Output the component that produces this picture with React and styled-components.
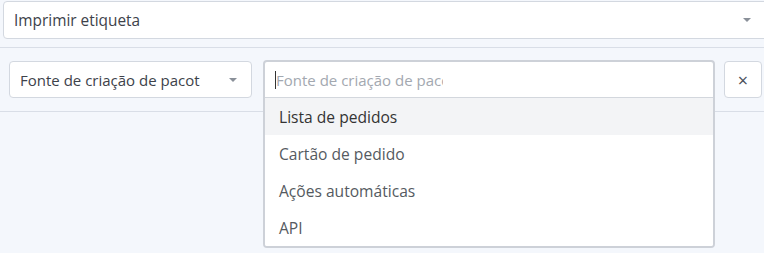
import React from 'react';
import styled, { createGlobalStyle } from 'styled-components';

const options = ['Lista de pedidos', 'Cartão de pedido', 'Ações automáticas', 'API'];

const GlobalStyle = createGlobalStyle`
	html, body {
		margin: 0;
		padding: 0;
		background: #f4f7fc;
		font-family: 'Open Sans', 'Liberation Sans', sans-serif;
		overflow: hidden;
	}
`;

const App = () => {
	return (
		<Page>
			<GlobalStyle />
			<Top>
				<Select wide>
					<SelectText size={15.4}>Imprimir etiqueta</SelectText>
					<Caret />
				</Select>
			</Top>
			<Panel>
				<Select>
					<SelectText size={15}>Fonte de criação de pacot</SelectText>
					<Caret />
				</Select>
				<Combo>
					<Popup>
						<SearchRow>
							<Cursor />
							<Placeholder>Fonte de criação de pacote</Placeholder>
						</SearchRow>
						<Menu>
							{options.map((option, i) => (
								<Option key={option} active={i === 0}>
									{option}
								</Option>
							))}
						</Menu>
					</Popup>
				</Combo>
				<ClearButton>×</ClearButton>
			</Panel>
		</Page>
	);
};

export default App;

const Page = styled.div`
	width: 764px;
	height: 253px;
`;

const Top = styled.div`
	padding: 1px 0 0 3px;
	height: 48px;
	box-sizing: border-box;
	border-bottom: 1px solid #d9dee7;
`;

const Select = styled.div`
	display: flex;
	align-items: center;
	justify-content: space-between;
	box-sizing: border-box;
	width: ${(p) => (p.wide ? '780px' : '243px')};
	height: ${(p) => (p.wide ? '38px' : '37px')};
	padding: ${(p) => (p.wide ? '0 31px 0 10px' : '0 14px 0 10px')};
	background: #fff;
	border: 1px solid #d3d8e0;
	border-radius: 4px;
	flex-shrink: 0;
`;

const SelectText = styled.span`
	font-size: ${(p) => p.size}px;
	color: #3d424a;
	white-space: nowrap;
	overflow: hidden;
`;

const Caret = styled.span`
	width: 0;
	height: 0;
	border-left: 4px solid transparent;
	border-right: 4px solid transparent;
	border-top: 4px solid #8a9099;
`;

const Panel = styled.div`
	display: flex;
	align-items: flex-start;
	gap: 11px;
	height: 64px;
	box-sizing: border-box;
	padding: 13px 0 0 9px;
	border-bottom: 1px solid #d9dee7;
`;

const Combo = styled.div`
	position: relative;
	width: 452px;
	height: 37px;
	flex-shrink: 0;
	margin-top: -1px;
`;

const Popup = styled.div`
	position: absolute;
	top: 0;
	left: 0;
	width: 452px;
	box-sizing: border-box;
	background: #fff;
	border: 2px solid #cdd1d8;
	border-radius: 4px;
	overflow: hidden;
	z-index: 2;
`;

const SearchRow = styled.div`
	display: flex;
	align-items: center;
	height: 35px;
	padding-left: 10px;
	border-bottom: 1px solid #d3d7dd;
`;

const Cursor = styled.span`
	width: 1px;
	height: 18px;
	background: #333;
`;

const Placeholder = styled.span`
	font-size: 15px;
	color: #a3a8b0;
	width: 167px;
	white-space: nowrap;
	overflow: hidden;
`;

const Menu = styled.div`
	display: flex;
	flex-direction: column;
`;

const Option = styled.div`
	height: 37px;
	display: flex;
	align-items: center;
	padding-left: 14px;
	font-size: 15.6px;
	color: ${(p) => (p.active ? '#333' : '#555a61')};
	background: ${(p) => (p.active ? '#f3f4f6' : '#fff')};
`;

const ClearButton = styled.button`
	width: 38px;
	height: 37px;
	flex-shrink: 0;
	box-sizing: border-box;
	margin-left: -2px;
	background: #fff;
	border: 1px solid #d3d8e0;
	border-radius: 4px;
	font-family: 'Open Sans', sans-serif;
	font-size: 18px;
	color: #4a4f57;
	line-height: 1;
	padding: 0;
	display: flex;
	align-items: center;
	justify-content: center;
`;
